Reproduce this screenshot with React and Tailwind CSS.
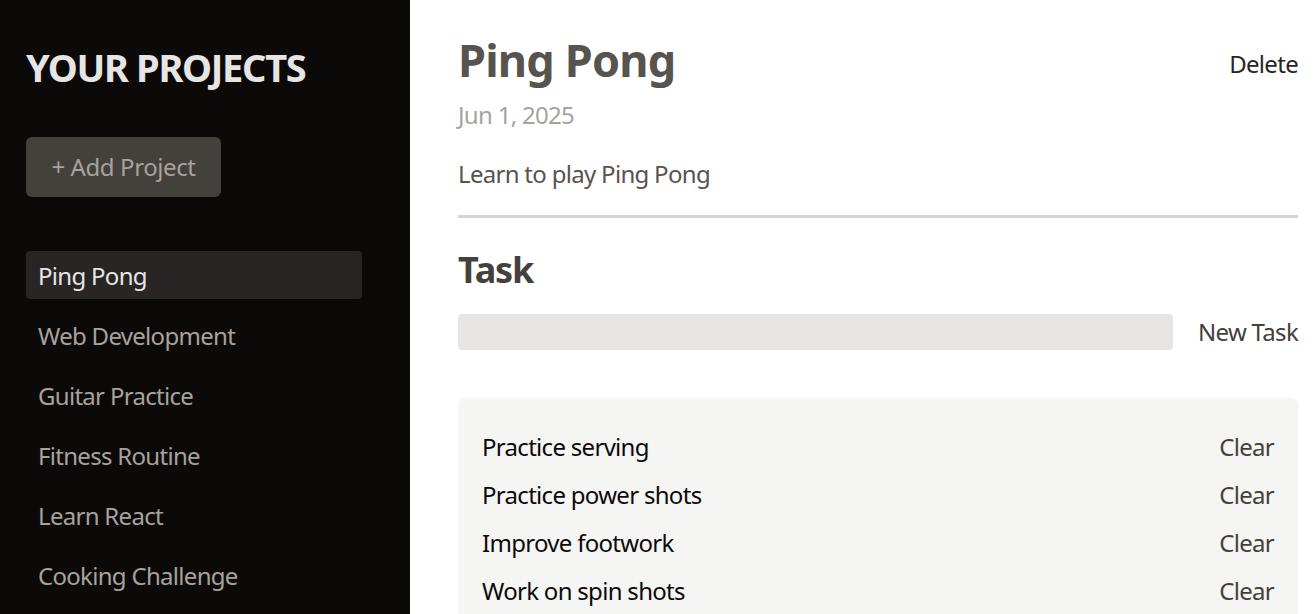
import { useState } from 'react';

const PROJECTS = ['Ping Pong', 'Web Development', 'Guitar Practice', 'Fitness Routine', 'Learn React', 'Cooking Challenge'];
const TASKS = ['Practice serving', 'Practice power shots', 'Improve footwork', 'Work on spin shots'];

export default function App() {
  const [selected, setSelected] = useState(0);

  return (
    <div className="flex h-[614px] w-[1315px] overflow-hidden bg-white font-['Noto_Sans',sans-serif] tracking-[-0.7px]">
      {/* Sidebar */}
      <aside className="w-[410px] flex-shrink-0 bg-[#0c0a09] px-[26px] pt-[44px]">
        <h2 className="text-[38px] font-bold leading-[46px] tracking-[-1.3px] text-[#e7e5e4] uppercase">Your Projects</h2>
        <button className="mt-[47px] h-[60px] w-[195px] rounded-md bg-[#44403c] text-center text-[24px] tracking-[-0.4px] text-[#a8a29e]">
          + Add Project
        </button>
        <ul className="mt-[54px] flex flex-col gap-[12px]">
          {PROJECTS.map((p, i) => (
            <li key={p}>
              <button
                onClick={() => setSelected(i)}
                className={`w-[336px] h-[48px] px-3 pt-[2px] rounded-[4px] text-left text-[24px] ${
                  i === selected ? 'bg-[#292524] text-[#e7e5e4]' : 'text-[#a8a29e]'
                }`}
              >
                {p}
              </button>
            </li>
          ))}
        </ul>
      </aside>

      {/* Main */}
      <main className="flex-1 pl-[48px] pr-[17px] pt-[28px]">
        <header className="pb-[23px] border-b-[3px] border-[#d6d3d1]">
          <div className="flex items-start justify-between">
            <h1 className="text-[45px] font-bold leading-[64px] tracking-[-0.8px] text-[#57534e]">Ping Pong</h1>
            <button className="mt-[18px] text-[24px] leading-[36px] text-[#292524]">Delete</button>
          </div>
          <p className="mt-[5px] text-[24px] leading-[36px] text-[#a8a29e] mb-[23px]">Jun 1, 2025</p>
          <p className="text-[24px] leading-[36px] text-[#57534e]">Learn to play Ping Pong</p>
        </header>

        <section className="pt-[28px]">
          <h2 className="text-[36px] font-bold leading-[48px] tracking-[-1.2px] text-[#44403c]">Task</h2>
          <div className="mt-[20px] flex items-center gap-[25px]">
            <input className="h-[36px] flex-1 rounded-[4px] bg-[#e7e5e4] px-3 outline-none" />
            <button className="text-[24px] leading-[36px] text-[#44403c]">New Task</button>
          </div>
          <ul className="mt-[48px] rounded-md bg-[#f5f5f4] px-[24px] pt-[25px] pb-[20px]">
            {TASKS.map((t) => (
              <li key={t} className="flex h-[48px] items-center justify-between">
                <span className="text-[24px] text-[#0c0a09]">{t}</span>
                <button className="text-[24px] text-[#44403c]">Clear</button>
              </li>
            ))}
          </ul>
        </section>
      </main>
    </div>
  );
}
